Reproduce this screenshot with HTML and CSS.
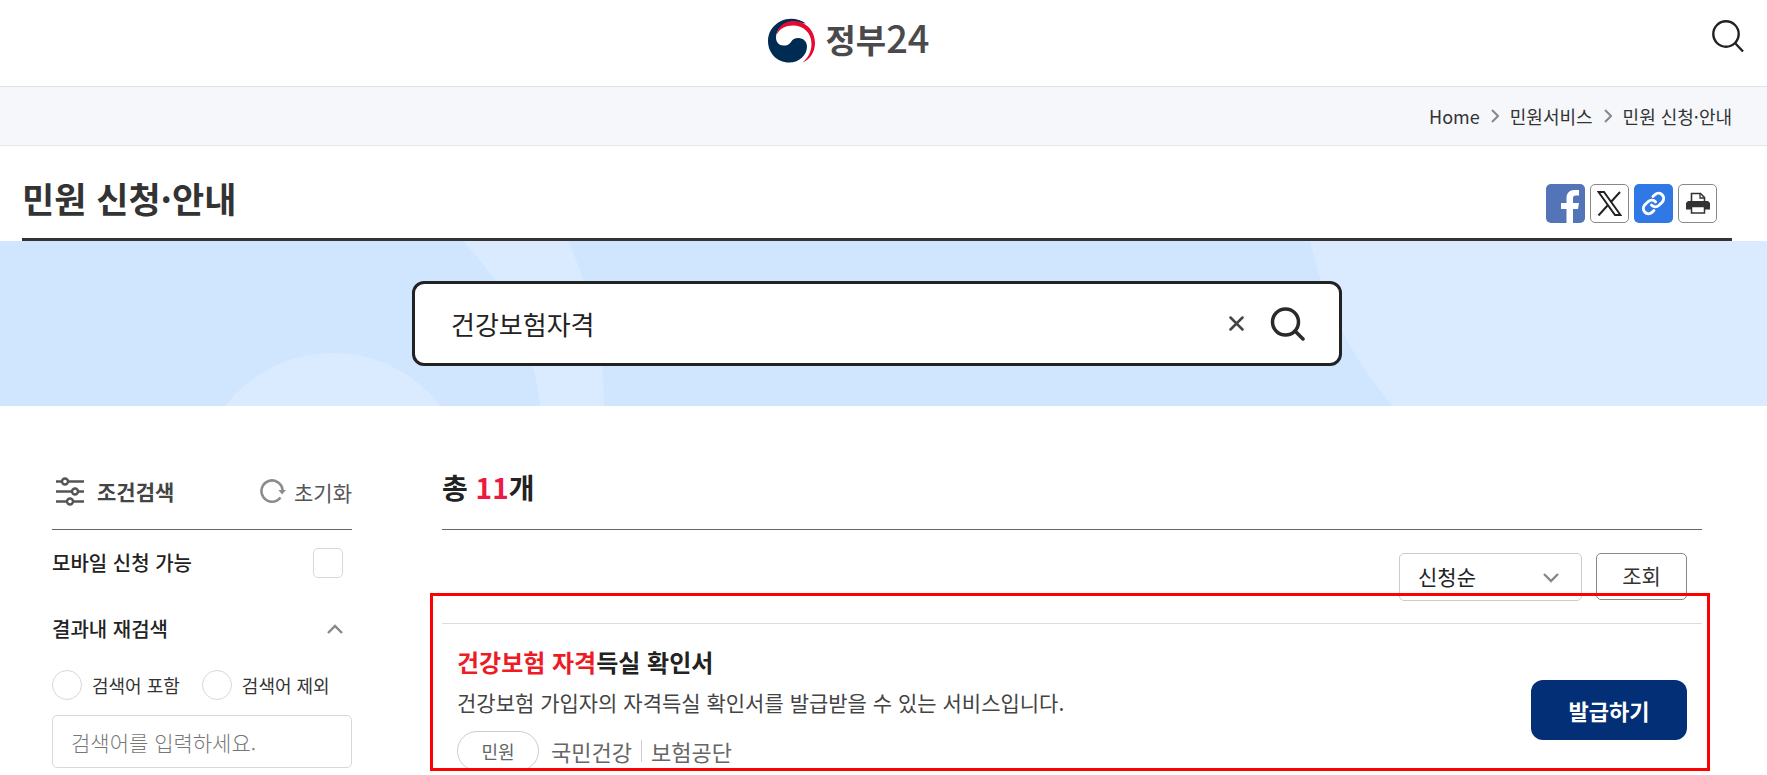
FILE: index.html
```
<!DOCTYPE html>
<html lang="ko">
<head>
  <meta charset="UTF-8">
  <meta name="viewport" content="width=device-width, initial-scale=1.0">
  <title>민원 신청·안내 | 정부24</title>
  <link rel="stylesheet" href="styles.css">
</head>
<body>
  <header class="header">
    <a class="logo" href="#" aria-label="정부24">
      <svg width="47" height="45" viewBox="0 0 47 45">
        <path fill="#002c53" d="M38 5.500C31 .5 21 -.8 13 3 4 7.500 0 15 0 23c0 12 9 21.500 21 21.500 11 0 18-8 18-16 0-5-4-8.500-8.500-8.500-4 0-6 1.500-7.500 4-2 3-4.500 3.500-7.500 3.500-4.500 0-7.500-3.500-7.500-8C8 11.500 15 4.500 24.500 3.500z"/>
        <path fill="#e60a32" d="M8.500 17C9.500 8.500 17 3 25.500 3 37.500 3 47 12.500 47 25c0 9-5 16.500-12.500 19.500C40 40 43.500 33.500 43.500 26 43.500 14.500 35 7.600 25 7.600 18 7.600 11.500 10.500 8.500 17z"/>
      </svg>
      <span class="logo-text">정부<span class="logo-num">24</span></span>
    </a>
    <button class="header-search" type="button" aria-label="통합검색">
      <svg width="32" height="33" viewBox="0 0 32 33" fill="none" stroke="#222" stroke-width="2.400">
        <circle cx="14" cy="14" r="12.700"/>
        <path d="M23 23l8 8.500"/>
      </svg>
    </button>
  </header>

  <nav class="breadcrumb" aria-label="현재 위치">
    <a href="#">Home</a>
    <svg width="8" height="14" viewBox="0 0 8 14"><path d="M1 1l6 6-6 6"/></svg>
    <a href="#">민원서비스</a>
    <svg width="8" height="14" viewBox="0 0 8 14"><path d="M1 1l6 6-6 6"/></svg>
    <a href="#">민원 신청·안내</a>
  </nav>

  <div class="page-title">
    <h1>민원 신청·안내</h1>
    <div class="share">
      <button class="share-facebook" type="button" aria-label="페이스북 공유">
        <svg width="39" height="39" viewBox="0 0 39 39"><path fill="#fff" d="M20.500 39V25H15v-6h5.500v-4.500C20.500 9 23.500 6 28.500 6H33v5.500h-3c-2.300 0-3 1-3 3V19h6l-1 6h-5v14z"/></svg>
      </button>
      <button class="share-x" type="button" aria-label="X 공유">
        <svg width="25" height="25" viewBox="0 0 25 25" fill="none" stroke="#222" stroke-width="2"><path d="M1.500 1h5.500l16.500 23H18zM23 1L13.500 11.500M11 14L1.500 24.500"/></svg>
      </button>
      <button class="share-link" type="button" aria-label="링크 복사">
        <svg width="25" height="25" viewBox="0 0 24 24" fill="none" stroke="#fff" stroke-width="2.800" stroke-linecap="round"><path d="M10 13.500a5 5 0 0 0 7 .4l3.500-3.400a5 5 0 0 0-7-7.100L11.500 5.300M14 10.500a5 5 0 0 0-7-.4L3.500 13.500a5 5 0 0 0 7 7.100L12.400 18.700"/></svg>
      </button>
      <button class="share-print" type="button" aria-label="인쇄">
        <svg width="24" height="22" viewBox="0 0 24 22"><path fill="#fff" stroke="#333" stroke-width="1.600" d="M5.500 10V1.500h9l4 4V10"/><path fill="none" stroke="#333" stroke-width="1.300" d="M14 1.500V6h4.500"/><path fill="#333" d="M2 9h20l2 2v6.500H0V11z"/><path fill="#fff" stroke="#333" stroke-width="1.500" d="M5.500 14.500h13v6.500h-13z"/></svg>
      </button>
    </div>
  </div>

  <section class="hero">
    <svg class="hero-bg" viewBox="0 0 1767 165" preserveAspectRatio="xMidYMid slice" fill="#daebff" aria-hidden="true">
      <circle cx="333" cy="248" r="136"/>
      <path d="M568 0A401 401 0 0 1 604 165H540A282 282 0 0 0 463 0z"/>
      <circle cx="1673" cy="-78" r="371"/>
    </svg>
    <form class="search-box">
      <input type="text" value="건강보험자격" aria-label="검색어">
      <button type="reset" aria-label="지우기">
        <svg width="15" height="15" viewBox="0 0 15 15" fill="none" stroke="#444" stroke-width="2.500" stroke-linecap="round"><path d="M1.500 1.500l12 12M13.500 1.500l-12 12"/></svg>
      </button>
      <button type="button" aria-label="검색">
        <svg width="35" height="34" viewBox="0 0 35 34" fill="none" stroke="#2a2a2a" stroke-width="3.500" stroke-linecap="round"><circle cx="15.500" cy="15" r="13"/><path d="M25 24l8 8"/></svg>
      </button>
    </form>
  </section>

  <main class="content">
    <aside class="filter">
      <div class="filter-head">
        <svg width="28" height="29" viewBox="0 0 28 29" fill="#fff" stroke="#555" stroke-width="2.400"><path d="M0 4.500h28M0 14.500h28M0 24.500h28"/><circle cx="9" cy="4.500" r="3"/><circle cx="19" cy="14.500" r="3"/><circle cx="14" cy="24.500" r="3"/></svg>
        <h2>조건검색</h2>
        <button class="reset" type="button">
          <svg width="26" height="25" viewBox="0 0 26 25"><path fill="none" stroke="#8c8c8c" stroke-width="2.600" d="M20.500 18.500A10.600 10.600 0 1 1 22.600 11"/><path fill="#8c8c8c" d="M18.500 11H26l-4 4.500z"/></svg>
          초기화
        </button>
      </div>
      <div class="filter-row">
        <label for="mobile">모바일 신청 가능</label>
        <input class="check" type="checkbox" id="mobile">
      </div>
      <button class="filter-row filter-toggle" type="button" aria-expanded="true">
        결과내 재검색
        <svg width="16" height="10" viewBox="0 0 16 10" fill="none" stroke="#888" stroke-width="2.400"><path d="M1 9l7-7 7 7"/></svg>
      </button>
      <div class="radios">
        <label><input class="check round" type="radio" name="within">검색어 포함</label>
        <label><input class="check round" type="radio" name="within">검색어 제외</label>
      </div>
      <input class="keyword" type="text" placeholder="검색어를 입력하세요." aria-label="결과내 검색어">
    </aside>

    <section class="results">
      <h2 class="total">총 <em>11</em>개</h2>
      <div class="sort">
        <select aria-label="정렬">
          <option>신청순</option>
        </select>
        <svg class="sort-arrow" width="16" height="10" viewBox="0 0 16 10" fill="none" stroke="#888" stroke-width="2.400"><path d="M1 1l7 7 7-7"/></svg>
        <button type="button">조회</button>
      </div>
      <article class="item">
        <div class="item-body">
          <h3><a href="#"><em>건강보험 자격</em>득실 확인서</a></h3>
          <p>건강보험 가입자의 자격득실 확인서를 발급받을 수 있는 서비스입니다.</p>
          <div class="meta">
            <span class="badge">민원</span>
            <span class="org">국민건강</span>
            <span class="org">보험공단</span>
          </div>
        </div>
        <button class="issue" type="button">발급하기</button>
        <div class="highlight"></div>
      </article>
    </section>
  </main>
</body>
</html>
```
FILE: styles.css
```
* {
  box-sizing: border-box;
}
body {
  margin: 0;
  font-family: "Noto Sans CJK KR", sans-serif;
  font-size: 20px;
  line-height: 30px;
  color: #222;
  background: #fff;
}
h1, h2, h3, p {
  margin: 0;
}
a {
  color: inherit;
  text-decoration: none;
}
em {
  font-style: normal;
}
svg {
  display: block;
  flex: none;
}
button, input, select {
  font: inherit;
  color: inherit;
}
button {
  padding: 0;
  border: none;
  background: none;
  cursor: pointer;
}

/* header */
.header {
  display: flex;
  align-items: center;
  height: 87px;
  padding-right: 23px;
  border-bottom: 1px solid #dfe2ea;
}
.logo {
  display: flex;
  align-items: center;
  gap: 10px;
  margin: 0 auto;
  padding-bottom: 6px;
}
.logo-text {
  padding-bottom: 4px;
  font-size: 33px;
  font-weight: 700;
  line-height: 40px;
  color: #4a4a4c;
}
.logo-num {
  font-size: 38px;
  font-weight: 500;
}
.header-search {
  padding: 0 0 14px 14px;
}

.breadcrumb {
  display: flex;
  align-items: center;
  justify-content: flex-end;
  gap: 11px;
  height: 59px;
  padding-right: 35px;
  background: #f5f7fb;
  border-bottom: 1px solid #e4e6ee;
  font-size: 18px;
  color: #333;
}
.breadcrumb svg {
  fill: none;
  stroke: #888;
  stroke-width: 2;
}

.page-title {
  display: flex;
  align-items: center;
  justify-content: space-between;
  height: 95px;
  margin: 0 35px 0 22px;
  padding-right: 15px;
  border-bottom: 3px solid #333;
}
.page-title h1 {
  padding-top: 12px;
  font-size: 35px;
  line-height: 50px;
  color: #333;
}
.share {
  display: flex;
  gap: 5px;
  padding-top: 22px;
}
.share button {
  display: flex;
  align-items: center;
  justify-content: center;
  width: 39px;
  height: 39px;
  border-radius: 5px;
}
.share .share-facebook {
  background: #5474b8;
}
.share .share-x,
.share .share-print {
  border: 1px solid #888;
}
.share .share-link {
  background: #2f78e6;
}

/* search */
.hero {
  position: relative;
  padding: 40px 35px 40px 22px;
  background: #d0e6ff;
}
.hero-bg {
  position: absolute;
  top: 0;
  left: 0;
  width: 100%;
  height: 100%;
}
.search-box {
  position: relative;
  display: flex;
  align-items: center;
  gap: 26px;
  max-width: 930px;
  height: 85px;
  margin: 0 auto;
  padding: 0 34px 0 36px;
  background: #fff;
  border: 3px solid #222;
  border-radius: 12px;
}
.search-box input {
  flex: 1;
  min-width: 0;
  padding: 0;
  border: none;
  outline: none;
  background: none;
  font-size: 26px;
  line-height: 40px;
}

.content {
  display: flex;
  gap: 90px;
  padding: 54px 65px 0 52px;
}

/* filter */
.filter {
  flex: 0 0 300px;
}
.filter-head {
  display: flex;
  align-items: center;
  height: 70px;
  padding: 0 0 6px 4px;
  border-bottom: 1px solid #666;
}
.filter-head h2 {
  margin-left: 13px;
  padding-bottom: 2px;
  font-size: 21px;
  line-height: 30px;
  color: #444;
}
.reset {
  display: flex;
  align-items: center;
  gap: 8px;
  margin-left: auto;
  font-size: 21px;
  color: #555;
}
.filter-row {
  display: flex;
  align-items: center;
  justify-content: space-between;
  width: 100%;
  height: 66px;
  padding-right: 9px;
  font-weight: 500;
}
.check {
  appearance: none;
  width: 30px;
  height: 30px;
  margin: 0;
  border: 1px solid #d8d8d8;
  border-radius: 5px;
  background: #fff;
}
.round {
  border-radius: 50%;
}
.radios {
  display: flex;
  gap: 22px;
  padding: 8px 0 15px;
  font-size: 18px;
  color: #333;
}
.radios label {
  display: flex;
  align-items: center;
  gap: 10px;
}
.keyword {
  display: block;
  width: 100%;
  height: 53px;
  padding: 0 18px;
  border: 1px solid #d8d8d8;
  border-radius: 5px;
  font-size: 21px;
  font-weight: 300;
}
.keyword::placeholder {
  color: #777;
}

/* results */
.results {
  flex: 1;
  min-width: 0;
}
.total {
  height: 70px;
  padding-top: 7px;
  border-bottom: 1px solid #666;
  font-size: 28px;
  line-height: 40px;
}
.total em {
  color: #ed1941;
}
.sort {
  position: relative;
  display: flex;
  justify-content: flex-end;
  gap: 14px;
  padding: 23px 15px 22px 0;
  font-size: 21px;
}
.sort select {
  appearance: none;
  width: 183px;
  height: 48px;
  padding: 0 18px 3px;
  border: 1px solid #ccc;
  border-radius: 5px;
  background: #fff;
}
.sort-arrow {
  position: absolute;
  top: 43px;
  right: 143px;
  pointer-events: none;
}
.sort button {
  width: 91px;
  height: 47px;
  padding-bottom: 3px;
  border: 1px solid #888;
  border-radius: 5px;
  color: #333;
}
.item {
  position: relative;
  display: flex;
  align-items: flex-start;
  justify-content: space-between;
  padding: 18px 15px 4px;
  border-top: 1px solid #ddd;
}
.item h3 {
  font-size: 24px;
  line-height: 40px;
}
.item h3 em {
  color: #ed1c24;
}
.item p {
  margin-bottom: 9px;
  font-size: 21px;
  line-height: 40px;
  color: #444;
}
.meta {
  display: flex;
  align-items: center;
  font-size: 22px;
  color: #666;
}
.badge {
  width: 82px;
  margin-right: 12px;
  border: 1px solid #ccc;
  border-radius: 20px;
  font-size: 18px;
  line-height: 38px;
  text-align: center;
}
.org {
  line-height: 22px;
}
.org + .org {
  margin-left: 9px;
  padding-left: 9px;
  border-left: 1px solid #ccc;
}
.issue {
  width: 156px;
  height: 60px;
  margin-top: 38px;
  background: #022f75;
  border-radius: 12px;
  font-size: 22px;
  font-weight: 700;
  color: #fff;
}
.highlight {
  position: absolute;
  top: -31px;
  right: -8px;
  bottom: 4px;
  left: -12px;
  border: 3px solid #f00;
  pointer-events: none;
}
```
